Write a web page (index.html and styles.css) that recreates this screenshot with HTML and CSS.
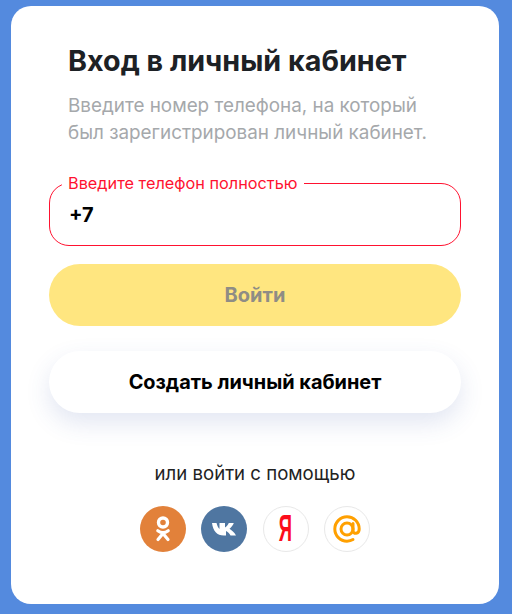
FILE: index.html
```html
<!DOCTYPE html>
<html lang="ru">
<head>
    <meta charset="UTF-8">
    <meta name="viewport" content="width=device-width, initial-scale=1.0">
    <title>Вход в личный кабинет</title>
    <link rel="stylesheet" href="styles.css">
</head>
<body>

<div class="card">
    <div class="intro">
        <h2 class="title">Вход в личный кабинет</h2>
        <p class="subtitle">Введите номер телефона, на который<br>был зарегистрирован личный кабинет.</p>
    </div>

    <form id="loginForm" novalidate>
        <fieldset class="phone-field">
            <legend class="phone-label">Введите телефон полностью</legend>
            <input class="phone-input" type="tel" id="phone" value="+7">
        </fieldset>

        <button class="btn btn-login" type="submit">Войти</button>
        <button class="btn btn-create" type="button">Создать личный кабинет</button>
    </form>

    <p class="social-title">или войти с помощью</p>

    <div class="social">
        <a class="social-item social-ok" href="#" aria-label="Одноклассники">
            <svg width="20" height="30" viewBox="0 0 20 30">
                <circle cx="10" cy="8.500" r="4.500" fill="none" stroke="#fff" stroke-width="3.400"/>
                <path d="M4.800 16.800c3.200 2.300 7.200 2.300 10.400 0M10 19.500 5 25.500M10 19.500l5 6" fill="none" stroke="#fff" stroke-width="3.200" stroke-linecap="round"/>
            </svg>
        </a>
        <a class="social-item social-vk" href="#" aria-label="ВКонтакте">
            <svg width="24" height="14" viewBox="0 0 24 14">
                <path d="M0 1h4.500c.8 3 1.800 5 3 6V1H13v4.500C14.500 4.500 15.800 3 16.800 1h5C21 3.500 19 5.500 17.500 6.800c2 1.200 5 3.700 6.500 6.700h-5.500c-1-2.200-2.800-3.900-4.500-4.500v4.500h-2.200C5 13.500 1 9 0 1z" fill="#fff"/>
            </svg>
        </a>
        <a class="social-item social-ya" href="#" aria-label="Яндекс"><span class="ya-letter">Я</span></a>
        <a class="social-item social-mail" href="#" aria-label="Mail.ru">
            <svg width="30" height="30" viewBox="0 0 30 30">
                <circle cx="15" cy="15" r="6" fill="none" stroke="#ffa000" stroke-width="3"/>
                <path d="M21 9.500v7c0 4 6.200 4 6.200-1.500C27.200 8 21.700 2.800 15 2.800S2.800 8.300 2.800 15 8.300 27.200 15 27.200c2.400 0 4.400-.6 6-1.600" fill="none" stroke="#ffa000" stroke-width="3" stroke-linecap="round"/>
            </svg>
        </a>
    </div>
</div>

</body>
</html>
```

FILE: styles.css
```css
* {
    box-sizing: border-box;
}
body {
    margin: 0;
    height: 614px;
    padding: 6px 13px 10px 11px;
    background: #548ade;
    font-family: Inter, "Noto Sans", sans-serif;
    overflow: hidden;
}
.card {
    height: 598px;
    padding: 38px 38px 0;
    background: #fff;
    border-radius: 20px;
}
.intro {
    padding-left: 19px;
}
.title {
    margin: 0;
    font-size: 28.7px;
    line-height: 34px;
    font-weight: 700;
    color: #1d2125;
}
.subtitle {
    margin: 14px 0 0;
    font-size: 18.85px;
    line-height: 27px;
    color: #a5a8ab;
}
.phone-field {
    height: 72px;
    margin: 28px 0 0;
    padding: 0 19px;
    border: 1px solid #ff1230;
    border-radius: 20px;
}
.phone-label {
    margin-left: -7px;
    padding: 0 6px;
    font-size: 16.3px;
    line-height: 18px;
    color: #ff1230;
}
.phone-input {
    display: block;
    width: 100%;
    padding: 0;
    margin-top: 9px;
    border: 0;
    outline: 0;
    font-family: inherit;
    font-size: 20px;
    line-height: 28px;
    font-weight: 700;
    color: #000;
}
.btn {
    display: block;
    width: 100%;
    height: 62px;
    border: 0;
    border-radius: 31px;
    font-family: inherit;
    font-size: 20px;
    font-weight: 700;
}
.btn-login {
    margin-top: 18px;
    background: #ffe680;
    color: #8f8d85;
}
.btn-create {
    margin-top: 25px;
    background: #fff;
    color: #000;
    font-size: 19.9px;
    box-shadow: 0 10px 25px rgba(60, 90, 170, 0.15);
}
.social-title {
    margin: 49px 0 0;
    font-size: 18.6px;
    line-height: 22px;
    text-align: center;
    color: #222;
}
.social {
    display: flex;
    gap: 15.4px;
    margin: 22px 0 0 91px;
}
.social-item {
    display: flex;
    align-items: center;
    justify-content: center;
    width: 46px;
    height: 46px;
    border-radius: 50%;
    text-decoration: none;
}
.social-ok {
    background: #e2813a;
}
.social-vk {
    background: #4f76a1;
}
.social-ya,
.social-mail {
    border: 1px solid #e8e8e8;
}
.ya-letter {
    font-family: "Liberation Sans", sans-serif;
    font-size: 37px;
    font-weight: 700;
    color: #fc0d1b;
    transform: scaleX(0.5);
}
```
